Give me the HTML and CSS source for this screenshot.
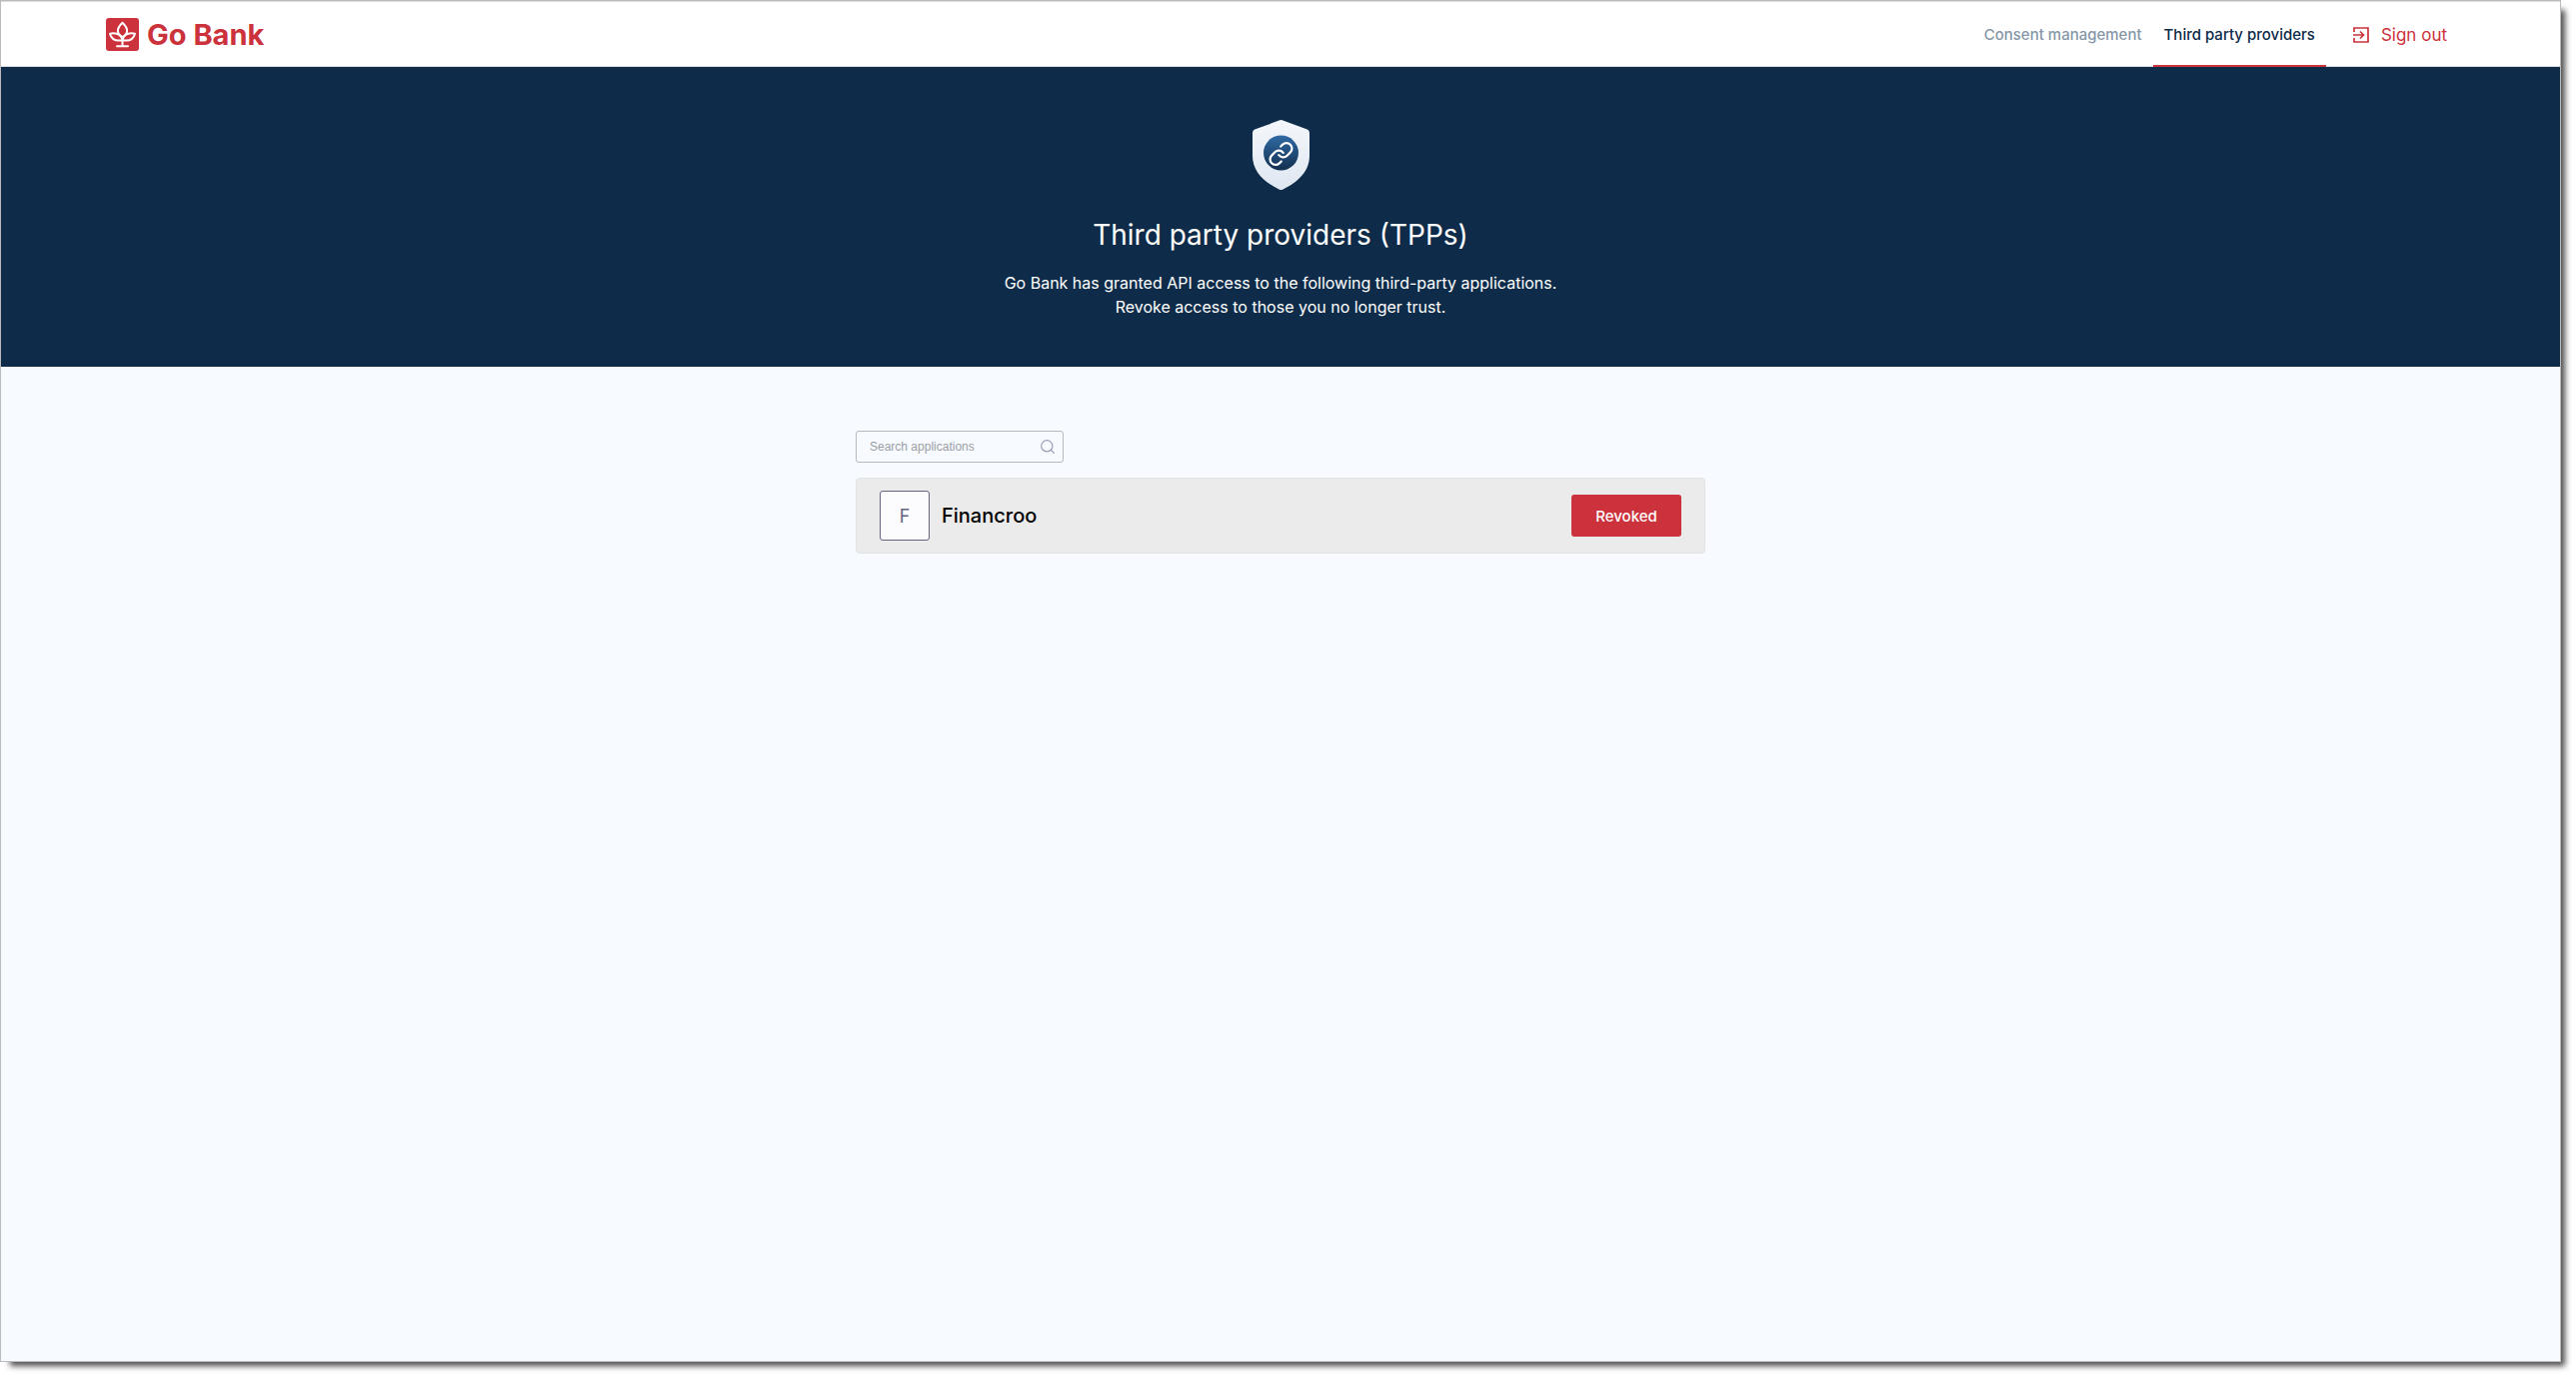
FILE: index.html
```html
<!DOCTYPE html>
<html lang="en">

<head>
    <meta charset="UTF-8">
    <meta name="viewport" content="width=device-width, initial-scale=1.0">
    <title>Go Bank - Third party providers</title>
    <link rel="stylesheet" href="styles.css">
</head>

<body>
    <div class="window">
        <header class="header">
            <a class="logo" href="#">
                <svg class="logo-icon" viewBox="0 0 33 33" fill="none" stroke="#fff" stroke-width="2" stroke-linecap="round" stroke-linejoin="round" aria-hidden="true">
                    <rect width="33" height="33" rx="3" fill="#cc323c" stroke="none" />
                    <path d="M16.500 4.800c-3.100 3-4.600 5.500-4.600 8 0 2.400 1.500 4.600 4.600 6.400 3.100-1.800 4.600-4 4.600-6.400 0-2.500-1.500-5-4.600-8z" />
                    <path d="M11.500 16C9 15.200 6.500 15.100 4 15.700c1.300 5.200 5.500 7.800 12.500 6.500-.6-3-2.200-5.100-5-6.200z" />
                    <path d="M21.500 16c2.500-.8 5-.9 7.500-.3-1.300 5.200-5.500 7.800-12.500 6.500.6-3 2.200-5.100 5-6.200z" />
                    <path d="M16.500 19v9M11 28.200h11" />
                </svg>
                <span>Go Bank</span>
            </a>
            <nav class="nav">
                <a class="nav-link" href="#">Consent management</a>
                <a class="nav-link active" href="#" aria-current="page">Third party providers</a>
                <button class="sign-out" type="button">
                    <svg class="sign-out-icon" viewBox="0 0 18 18" fill="none" stroke="currentColor" stroke-width="1.700" aria-hidden="true">
                        <path d="M2 6V2h14v14H2v-4" />
                        <path d="M1 9h10M8 5.500 11.500 9 8 12.500" />
                    </svg>
                    Sign out
                </button>
            </nav>
        </header>

        <section class="hero">
            <svg class="shield" viewBox="0 0 57 70" aria-hidden="true">
                <defs>
                    <linearGradient id="shieldFill" x1="0" y1="0" x2="0" y2="1">
                        <stop offset="0" stop-color="#f4f7fb" />
                        <stop offset="1" stop-color="#dfe7f1" />
                    </linearGradient>
                    <linearGradient id="circleFill" x1="0" y1="0" x2="0" y2="1">
                        <stop offset="0" stop-color="#2f6aa3" />
                        <stop offset="1" stop-color="#142f50" />
                    </linearGradient>
                </defs>
                <path fill="url(#shieldFill)" d="M27.300.3q1.200-.5 2.400 0L54.800 9.600Q57 10.500 57 13v23c0 15-11 26-26.500 33.500q-2 1-4 0C11 62 0 51 0 36V13q0-2.500 2.200-3.400z" />
                <circle cx="28.500" cy="33" r="17.500" fill="url(#circleFill)" />
                <g transform="translate(15.300 20.800) scale(1.100)" fill="none" stroke="#fff" stroke-width="2" stroke-linecap="round" stroke-linejoin="round">
                    <path d="M10 13a5 5 0 0 0 7.540 .54l3-3a5 5 0 0 0-7.070-7.070l-1.720 1.710" />
                    <path d="M14 11a5 5 0 0 0-7.540-.54l-3 3a5 5 0 0 0 7.070 7.070l1.710-1.710" />
                </g>
            </svg>
            <h1>Third party providers (TPPs)</h1>
            <p>Go Bank has granted API access to the following third-party applications.<br>Revoke access to those you no longer trust.</p>
        </section>

        <main class="content">
            <div class="search">
                <input type="text" placeholder="Search applications" aria-label="Search applications">
                <svg class="search-icon" viewBox="0 0 14 14" fill="none" stroke="currentColor" stroke-width="1.200" stroke-linecap="round" aria-hidden="true">
                    <circle cx="6.300" cy="6.300" r="5.600" />
                    <path d="m10.500 10.500 2.900 2.900" />
                </svg>
            </div>
            <div class="app-card">
                <div class="avatar">F</div>
                <h2>Financroo</h2>
                <button class="revoke" type="button">Revoked</button>
            </div>
        </main>
    </div>
</body>

</html>
```

FILE: styles.css
```css
* {
    box-sizing: border-box;
}

body {
    display: flex;
    min-height: 100vh;
    margin: 0;
    padding: 0 15px 15px 0;
    background-color: white;
    font-family: Inter, sans-serif;
}

.window {
    flex: 1;
    border: 1px solid #bbb;
    background-color: #f7faff;
    box-shadow: 7px 7px 6px -3px rgba(0, 0, 0, 0.7);
}

.header {
    display: flex;
    justify-content: space-between;
    height: 66px;
    padding: 0 113px 0 105px;
    border-top: 1px solid #ddd;
    border-bottom: 1px solid #ddd;
    background-color: white;
}

.logo {
    display: flex;
    align-items: center;
    gap: 8px;
    color: #cc323c;
    font-size: 29px;
    font-weight: 700;
    text-decoration: none;
}

.logo-icon {
    width: 33px;
    height: 33px;
}

.nav {
    display: flex;
    margin-bottom: -1px;
}

.nav-link {
    display: flex;
    align-items: center;
    padding: 2px 11px 0;
    border-bottom: 2px solid transparent;
    color: #8798a8;
    font-size: 15px;
    font-weight: 500;
    text-decoration: none;
}

.nav-link.active {
    border-bottom-color: #cc323c;
    color: #0e2c49;
}

.sign-out {
    display: flex;
    align-items: center;
    gap: 11px;
    margin-left: 26px;
    padding: 0;
    border: none;
    background: none;
    color: #cc323c;
    font-family: inherit;
    font-size: 17px;
    cursor: pointer;
}

.sign-out-icon {
    width: 18px;
    height: 18px;
}

.hero {
    display: flex;
    flex-direction: column;
    align-items: center;
    padding: 53px 16px 48px;
    background-color: #0e2c49;
    color: white;
    text-align: center;
}

.shield {
    width: 57px;
    height: 70px;
}

.hero h1 {
    margin: 28px 0 19px;
    font-size: 28px;
    font-weight: 400;
    line-height: 34px;
}

.hero p {
    margin: 0;
    font-size: 16px;
    line-height: 24px;
}

.content {
    max-width: 850px;
    margin: 0 auto;
    padding-top: 64px;
}

.search {
    position: relative;
    display: flex;
    width: 208px;
}

.search input {
    width: 100%;
    height: 32px;
    padding: 0 32px 0 13px;
    border: 1px solid #b5b9c0;
    border-radius: 3px;
    background-color: transparent;
    font-family: "Liberation Sans", Arial, sans-serif;
    font-size: 12px;
}

.search input::placeholder {
    color: #9b9ea3;
}

.search-icon {
    position: absolute;
    top: 9px;
    right: 9px;
    width: 14px;
    height: 14px;
    color: #9a9db3;
}

.app-card {
    display: flex;
    align-items: center;
    gap: 12px;
    height: 76px;
    margin-top: 15px;
    padding: 0 23px;
    border: 1px solid #e2e4e7;
    border-radius: 4px;
    background-color: #ebebeb;
}

.avatar {
    display: flex;
    align-items: center;
    justify-content: center;
    width: 50px;
    height: 50px;
    border: 1px solid #626480;
    border-radius: 3px;
    background-color: #fcfcff;
    color: #626480;
    font-size: 18px;
}

.app-card h2 {
    flex: 1;
    margin: 0;
    font-size: 20px;
    font-weight: 500;
}

.revoke {
    width: 110px;
    height: 42px;
    border: none;
    border-radius: 3px;
    background-color: #cc323c;
    color: white;
    font-family: inherit;
    font-size: 15px;
    font-weight: 500;
    cursor: pointer;
}
```
